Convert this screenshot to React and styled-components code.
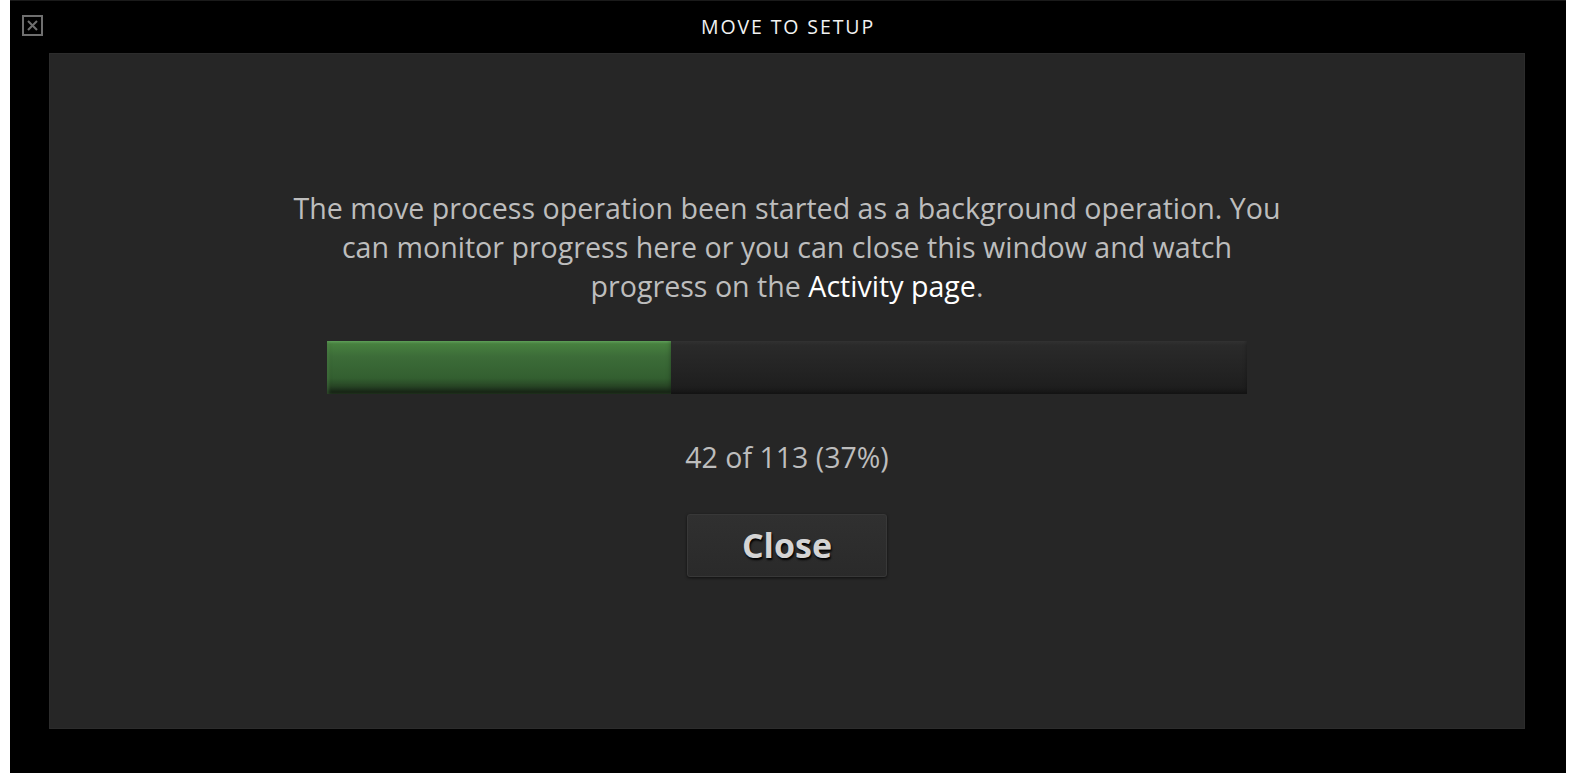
import React from "react";
import styled, { createGlobalStyle } from "styled-components";

const Global = createGlobalStyle`
  html, body { margin: 0; padding: 0; background: #ffffff; }
  body { font-family: "Open Sans", "Noto Sans", sans-serif; }
  * { box-sizing: border-box; }
`;

const Window = styled.div`
  margin-left: 10px;
  width: 1556px;
  height: 773px;
  background: #000;
  border-top: 1px solid #1a1a1a;
  display: flex;
  flex-direction: column;
  align-items: center;
`;

const TitleBar = styled.div`
  position: relative;
  width: 100%;
  height: 52px;
  display: flex;
  align-items: center;
  justify-content: center;
`;

const Title = styled.h1`
  margin: 0;
  font-family: "Open Sans", sans-serif;
  font-weight: 400;
  font-size: 19.5px;
  letter-spacing: 1.9px;
  color: #f2f2f2;
  padding-bottom: 1px;
`;

const CloseIcon = styled.button`
  position: absolute;
  left: 12px;
  top: 14px;
  width: 21px;
  height: 21px;
  padding: 0;
  border: 2px solid #6f6f6f;
  background: transparent;
  display: flex;
  align-items: center;
  justify-content: center;
  cursor: pointer;
`;

const Panel = styled.div`
  width: 1476px;
  margin-left: -2px;
  height: 676px;
  background: #262626;
  border: 1px solid #2c2c2c;
  display: flex;
  flex-direction: column;
  align-items: center;
  padding-top: 134px;
`;

const Message = styled.p`
  margin: 0;
  width: 1000px;
  text-align: center;
  font-size: 28.6px;
  line-height: 39px;
  color: #bdbdbd;
`;

const Link = styled.span`
  color: #ffffff;
`;

const Track = styled.div`
  margin-top: 36px;
  width: 920px;
  height: 53px;
  background: linear-gradient(to bottom, #333 0px, #2a2a2a 4px, #242424 50%, #1c1c1c 100%);
  box-shadow: inset 0 -3px 4px rgba(0, 0, 0, 0.35);
  display: flex;
`;

const Fill = styled.div`
  height: 100%;
  background: linear-gradient(to bottom, #5e9d58 0px, #47803f 3px, #3c6c38 30%, #335f30 70%, #1d2d1b 100%);
  box-shadow: inset 2px 0 3px rgba(120, 190, 110, 0.25), inset 0 -4px 5px rgba(0, 0, 0, 0.35);
`;

const Count = styled.div`
  margin-top: 43px;
  font-size: 28.5px;
  line-height: 40px;
  color: #bdbdbd;
`;

const CloseButton = styled.button`
  margin-top: 37px;
  width: 200px;
  height: 63px;
  border-radius: 3px;
  border: 1px solid #383838;
  background: linear-gradient(to bottom, #303030, #2a2a2a);
  box-shadow: 0 1px 3px rgba(0, 0, 0, 0.6);
  font-family: "Open Sans", sans-serif;
  font-weight: 700;
  font-size: 34px;
  color: #d4d4d4;
  text-shadow: 1px 2px 2px #000;
  cursor: pointer;
  padding: 0 0 2px 0;
`;

const total = 113;
const done = 42;
const pct = Math.round((done / total) * 100);

export default function App() {
  return (
    <>
      <Global />
      <Window>
        <TitleBar>
          <CloseIcon aria-label="close">
            <svg width="13" height="13" viewBox="0 0 13 13">
              <path d="M2 2 L11 11 M11 2 L2 11" stroke="#6f6f6f" strokeWidth="2" />
            </svg>
          </CloseIcon>
          <Title>MOVE TO SETUP</Title>
        </TitleBar>
        <Panel>
          <Message>
            The move process operation been started as a background operation. You can monitor
            progress here or you can close this window and watch progress on the{" "}
            <Link>Activity page</Link>.
          </Message>
          <Track>
            <Fill style={{ width: `${(done / total) * 100 + 0.2}%` }} />
          </Track>
          <Count>
            {done} of {total} ({pct}%)
          </Count>
          <CloseButton>Close</CloseButton>
        </Panel>
      </Window>
    </>
  );
}
